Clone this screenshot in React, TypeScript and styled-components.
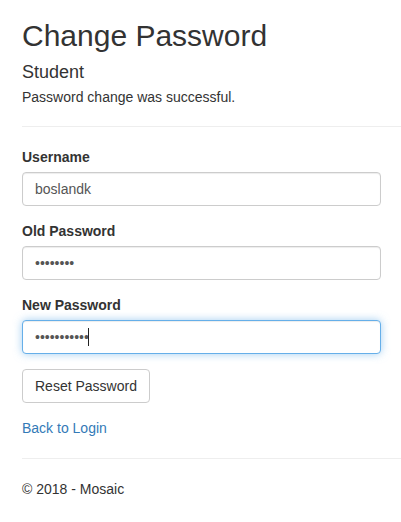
import React from "react";
import styled, { createGlobalStyle, css } from "styled-components";

const GlobalStyle = createGlobalStyle`
  html, body {
    margin: 0;
    padding: 0;
    background: #fff;
  }
  body {
    font-family: "Liberation Sans", Arial, sans-serif;
    font-size: 14px;
    line-height: 20px;
    color: #333;
  }
  * { box-sizing: border-box; }
`;

const Page = styled.div`
  padding: 19px 0 0 22px;
`;

const Title = styled.h2`
  margin: 0;
  font-size: 30px;
  line-height: 33px;
  font-weight: 400;
  color: #333;
`;

const Subtitle = styled.h4`
  margin: 10px 0 0;
  font-size: 18px;
  line-height: 20px;
  font-weight: 400;
  color: #333;
`;

const Message = styled.p`
  margin: 5px 0 0;
`;

const Rule = styled.hr`
  margin: 19px 0 20px;
  border: 0;
  border-top: 1px solid #eee;
  height: 0;
`;

const Form = styled.form`
  width: 359px;
  margin: 0;
`;

const Group = styled.div`
  display: flex;
  flex-direction: column;
  margin-bottom: 15px;
`;

const Label = styled.label`
  font-weight: 700;
  margin-bottom: 5px;
  line-height: 20px;
`;

const Field = styled.div`
  position: relative;
`;

const Caret = styled.span<{ $left: number }>`
  position: absolute;
  top: 8px;
  left: ${(p) => p.$left}px;
  width: 1px;
  height: 18px;
  background: #222;
`;

const Input = styled.input<{ $focused?: boolean }>`
  display: block;
  width: 100%;
  height: 34px;
  padding: 6px 12px;
  font-family: "Liberation Sans", Arial, sans-serif;
  font-size: 14px;
  line-height: 20px;
  color: #555;
  background: #fff;
  border: 1px solid #ccc;
  border-radius: 4px;
  box-shadow: inset 0 1px 1px rgba(0, 0, 0, 0.075);
  outline: none;
  caret-color: transparent;
  ${(p) =>
    p.$focused &&
    css`
      border-color: #66afe9;
      box-shadow: inset 0 1px 1px rgba(0, 0, 0, 0.075),
        0 0 8px rgba(102, 175, 233, 0.6);
    `}
`;

const Button = styled.button`
  display: inline-block;
  height: 34px;
  padding: 6px 12px;
  font-family: "Liberation Sans", Arial, sans-serif;
  font-size: 14px;
  line-height: 20px;
  color: #333;
  background: #fff;
  border: 1px solid #ccc;
  border-radius: 4px;
  cursor: pointer;
`;

const LinkLine = styled.p`
  margin: 0;
`;

const Link = styled.a`
  color: #337ab7;
  text-decoration: none;
`;

const FooterRule = styled.hr`
  margin: 20px 0;
  border: 0;
  border-top: 1px solid #eee;
  height: 0;
`;

const Footer = styled.footer`
  p {
    margin: 0;
  }
`;

export default function App() {
  return (
    <>
      <GlobalStyle />
      <Page>
        <Title>Change Password</Title>
        <Subtitle>Student</Subtitle>
        <Message>Password change was successful.</Message>
        <Rule />
        <Form onSubmit={(e) => e.preventDefault()}>
          <Group>
            <Label htmlFor="username">Username</Label>
            <Input id="username" type="text" defaultValue="boslandk" />
          </Group>
          <Group>
            <Label htmlFor="oldpw">Old Password</Label>
            <Input id="oldpw" type="password" defaultValue="12345678" />
          </Group>
          <Group>
            <Label htmlFor="newpw">New Password</Label>
            <Field>
              <Input id="newpw" type="password" defaultValue="12345678901" $focused />
              <Caret $left={66} />
            </Field>
          </Group>
          <Group>
            <div>
              <Button type="submit">Reset Password</Button>
            </div>
          </Group>
        </Form>
        <LinkLine>
          <Link href="#">Back to Login</Link>
        </LinkLine>
        <FooterRule />
        <Footer>
          <p>© 2018 - Mosaic</p>
        </Footer>
      </Page>
    </>
  );
}
